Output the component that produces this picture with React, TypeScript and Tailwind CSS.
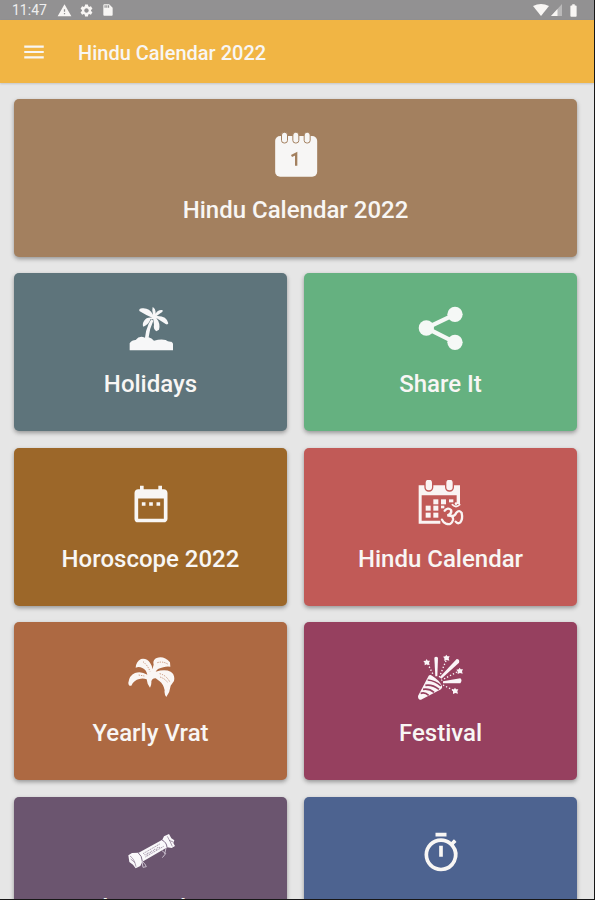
import type { ReactNode } from "react";
import {
  MdBatteryFull,
  MdDateRange,
  MdMenu,
  MdOutlineTimer,
  MdSdCard,
  MdSettings,
  MdWarning,
} from "react-icons/md";

function CalendarIcon() {
  return (
    <svg viewBox="34.5 33 144 144" className="size-12" fill="#f7f6f5">
      <rect x="44" y="48" width="126" height="122" rx="15" />
      <g stroke="#a3805f" strokeWidth="3">
        <rect x="63" y="37" width="18" height="32" rx="8" />
        <rect x="97" y="37" width="18" height="32" rx="8" />
        <rect x="131" y="37" width="18" height="32" rx="8" />
      </g>
      <path d="M93 108 L107 101 V137" fill="none" stroke="#a3805f" strokeWidth="7" />
    </svg>
  );
}

function PalmIcon() {
  return (
    <svg viewBox="35 33 144 144" className="size-12" fill="#f7f7f8">
      <path d="M43 169 V148 Q50 138 61 138 Q70 126 83 129 L89 131 Q91 109 100 89 L108 76 L114 80 Q102 105 100 130 Q109 133 116 140 Q137 134 151 138 Q158 144 168 143 Q174 146 173 151 V169 Z" />
      <path d="M111 71 Q91 63 72 51 Q70 42 83 43 Q102 42 113 62 Q109 47 112 39 Q121 43 121 59 Q127 46 141 48 Q145 52 136 57 L124 66 Q154 65 159 88 Q157 93 151 90 L123 72 Q136 88 131 107 L123 112 Q113 104 116 92 L114 76 L106 75 Q99 93 84 98 Q80 91 86 81 Q93 69 110 71 Z" />
    </svg>
  );
}

function ShareIcon() {
  return (
    <svg viewBox="35 33 144 144" className="size-12" fill="#f5f8f6">
      <path d="M149 61 L63 102 L149 145" fill="none" stroke="#f5f8f6" strokeWidth="13" />
      <circle cx="63" cy="102" r="23" />
      <circle cx="149" cy="61" r="23" />
      <circle cx="149" cy="145" r="23" />
    </svg>
  );
}

function OmCalendarIcon() {
  return (
    <svg viewBox="35 31 144 144" className="size-12" fill="#faf4f3">
      <path d="M40 47 H164 V103 H154 V77 H49 V153 H105 V162 H40 Z" />
      <g stroke="#c15a57" strokeWidth="4">
        <rect x="59" y="28" width="23" height="36" rx="11" />
        <rect x="121" y="28" width="23" height="36" rx="11" />
      </g>
      <rect x="84" y="89" width="15" height="15" />
      <rect x="107" y="89" width="15" height="15" />
      <rect x="131" y="89" width="13" height="9" />
      <rect x="61" y="108" width="15" height="15" />
      <rect x="84" y="108" width="15" height="15" />
      <rect x="107" y="108" width="10" height="8" />
      <rect x="61" y="129" width="15" height="15" />
      <rect x="84" y="129" width="15" height="15" />
      <g fill="none" stroke="#faf4f3" strokeWidth="7" strokeLinecap="round">
        <path d="M118 123 Q128 112 137 121 Q141 132 126 138 Q145 136 143 151 Q138 168 122 162 Q113 158 110 150" />
        <path d="M137 138 Q147 142 153 129 Q162 119 169 130 Q173 148 165 158 Q157 164 151 156" />
        <path d="M141 105 Q152 116 163 105" strokeWidth="5" />
      </g>
      <circle cx="152" cy="102" r="4" />
    </svg>
  );
}

function LeavesIcon() {
  return (
    <svg viewBox="35 29 144 144" className="size-12" fill="#faf6f4">
      <path d="M104 130 L97 118 L94 105 Q83 101 72 104 Q56 107 48 124 Q39 126 39 115 Q42 93 59 86 Q77 79 96 91 Q92 75 81 71 Q71 66 61 70 Q62 52 77 44 Q95 41 104 55 Q110 62 111 75 L115 61 Q111 47 124 41 Q145 33 164 54 L165 67 Q154 65 144 69 Q127 72 121 82 Q149 74 166 82 Q180 91 176 110 L166 124 Q164 143 153 158 Q146 149 148 138 Q145 120 132 110 L121 102 Q111 101 108 111 Q109 122 104 130 Z" />
      <path d="M133 88 Q152 92 163 112 M134 98 Q151 104 157 115 M126 55 Q142 50 157 59 M70 92 L87 95 M83 52 Q98 64 104 81" fill="none" stroke="#b06b45" strokeWidth="2" strokeDasharray="4 3" />
    </svg>
  );
}

function PopperIcon() {
  return (
    <svg viewBox="35 29 144 144" className="size-12" fill="#fbf5f8">
      <path d="M70 94 Q74 89 81 95 Q101 107 110 125 Q112 133 103 137 L47 166 Q38 168 38 155 Z" />
      <path d="M67 107 Q90 109 107 125 M60 123 Q80 119 101 135 M53 135 Q72 132 86 144 M46 147 Q59 143 70 153" fill="none" stroke="#96405f" strokeWidth="5" />
      <path d="M87 40 Q92 34 98 40 L96 96 L90 96 Z" />
      <path d="M154 44 Q164 45 161 55 L108 103 L103 99 Z" />
      <path d="M165 102 Q172 108 165 117 L113 117 L113 111 Z" />
      <path id="spark" d="m123 31 3 5 7 0-3 6 2 7-8-2-7 3 0-8-4-5 7-1Z" />
      <use href="#spark" x="-59" y="13" />
      <use href="#spark" x="40" y="39" />
      <use href="#spark" x="26" y="99" />
      <path d="M122 49 L101 101 M67 58 L85 94 M155 83 L108 108 M113 122 L147 139" fill="none" stroke="#fbf5f8" strokeWidth="4" strokeDasharray="4 6" />
    </svg>
  );
}

function ScrollIcon() {
  return (
    <svg viewBox="380 177 144 144" className="size-12" fill="#faf8fb">
      <path d="M384 256 L395 249 L415 248 L486 209 L491 199 L506 192 L513 205 L522 211 L519 219 L524 228 L514 234 L501 232 L426 275 L420 288 L406 295 L398 284 L387 276 Z" />
      <g fill="none" stroke="#83718b" strokeWidth="2">
        <path d="M414 249 Q425 257 426 274 M485 210 Q499 217 500 232" strokeWidth="3" />
        <path d="M389 258 Q402 266 407 290 M391 267 L404 278 M501 199 Q509 213 516 229 M506 211 L519 216" />
        <path d="M428 251 L480 221 M435 261 L490 229 M432 254 l9 1 0-6 9 0 1-5 8-1 2-5 8 0 2-5 8-1" strokeDasharray="4 2" />
      </g>
      <path d="M425 274 L428 292 L438 290 L433 281 Z M485 242 L496 251 L486 263 M497 234 L493 252" fill="none" stroke="#c9bfcd" strokeWidth="3" />
    </svg>
  );
}

type TileProps = { title: string; color: string; icon: ReactNode };

function Tile({ title, color, icon }: TileProps) {
  return (
    <div
      className={`flex h-[158px] flex-col items-center rounded-[5px] pt-8 shadow-[0_2px_4px_rgba(0,0,0,0.35)] ${color}`}
    >
      <div className="flex size-12 items-center justify-center">{icon}</div>
      <h2 className="mt-[17px] text-[24px] leading-7 font-medium whitespace-nowrap">{title}</h2>
    </div>
  );
}

const tiles: TileProps[] = [
  { title: "Hindu Calendar 2022", color: "col-span-2 bg-[#a3805f]", icon: <CalendarIcon /> },
  { title: "Holidays", color: "bg-[#5e747b]", icon: <PalmIcon /> },
  { title: "Share It", color: "bg-[#65b180]", icon: <ShareIcon /> },
  { title: "Horoscope 2022", color: "bg-[#9c6729]", icon: <MdDateRange size={44} /> },
  { title: "Hindu Calendar", color: "bg-[#c15a57]", icon: <OmCalendarIcon /> },
  { title: "Yearly Vrat", color: "bg-[#ad6942]", icon: <LeavesIcon /> },
  { title: "Festival", color: "bg-[#96405f]", icon: <PopperIcon /> },
  { title: "Daily Panchang", color: "bg-[#6b556f]", icon: <ScrollIcon /> },
  { title: "Hora", color: "bg-[#4d6390]", icon: <MdOutlineTimer size={44} /> },
];

export default function App() {
  return (
    <div className="flex h-[900px] w-[595px] flex-col overflow-hidden border-r border-b border-[#171717] bg-[#e6e6e6] font-['Roboto',sans-serif] text-[#f8f6f4]">
      {/* Status bar */}
      <div className="flex h-5 shrink-0 items-center bg-[#929192] pr-[13px] pl-[12px] text-[14px] leading-5">
        <span className="w-[45px] pt-[-1px] text-[#eeeeee]">11:47</span>
        <MdWarning size={15} />
        <MdSettings size={15} className="ml-[7px]" />
        <MdSdCard size={14} className="ml-[7px] -scale-x-100 scale-y-100" />
        <svg viewBox="0 0 46 16" className="ml-auto h-4 w-[46px]" fill="currentColor">
          <path d="M0 4 Q8 0 16 4 L8 14 Z" />
          <path d="M29 2 V14 H18 Z" opacity="0.4" />
          <path d="M24.5 7 V14 H18 Z" />
        </svg>
        <MdBatteryFull size={15} className="-ml-[13px]" />
      </div>

      {/* App bar */}
      <header className="flex h-[63px] shrink-0 items-center bg-[#f1b544] pl-[21px] shadow-[0_1px_2px_rgba(0,0,0,0.15)]">
        <MdMenu size={26} />
        <h1 className="ml-[31px] pt-0.5 text-[20px] leading-6 font-medium">Hindu Calendar 2022</h1>
      </header>

      <main className="grid grid-cols-2 gap-x-[17px] gap-y-[16.4px] pt-4 pr-[17px] pl-[14px]">
        {tiles.map((tile) => (
          <Tile key={tile.title} {...tile} />
        ))}
      </main>
    </div>
  );
}
